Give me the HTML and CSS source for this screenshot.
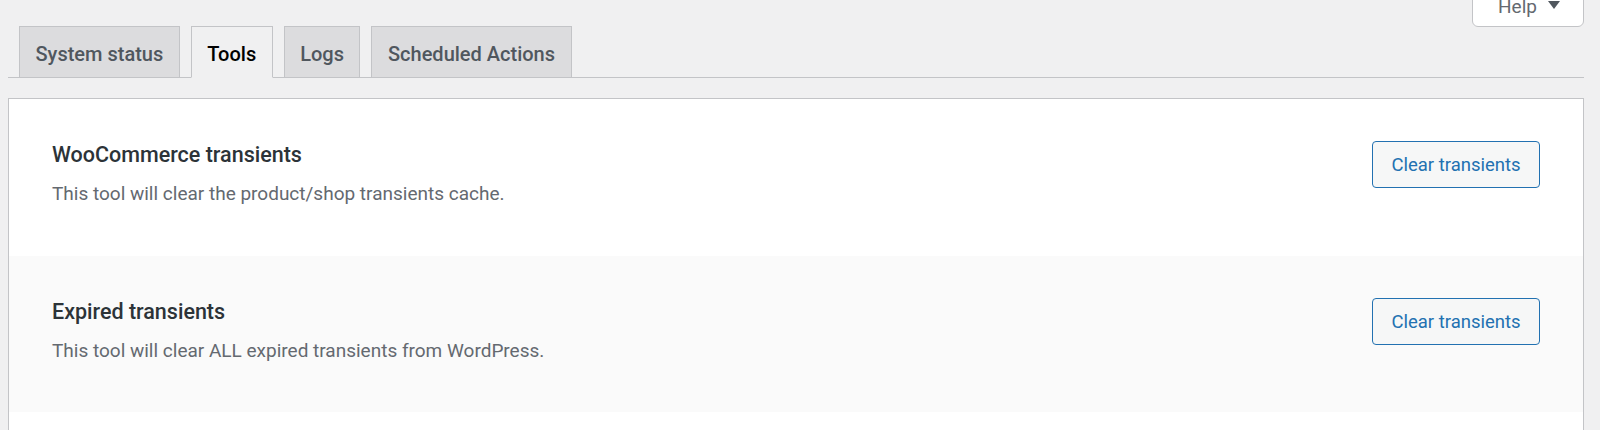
FILE: index.html
```html
<!DOCTYPE html>
<html lang="en">
<head>
<meta charset="utf-8">
<title>Status ‹ Tools</title>
<link rel="stylesheet" href="styles.css">
</head>
<body>
<div class="help-bar">
  <button class="help-toggle" type="button">Help <span class="caret"></span></button>
</div>
<nav class="tabs">
  <a class="tab" href="#">System status</a>
  <a class="tab active" href="#">Tools</a>
  <a class="tab" href="#">Logs</a>
  <a class="tab" href="#">Scheduled Actions</a>
</nav>
<div class="panel">
  <div class="tool-row">
    <div class="tool-text">
      <div class="tool-name">WooCommerce transients</div>
      <p class="tool-desc">This tool will clear the product/shop transients cache.</p>
    </div>
    <button class="tool-btn" type="button">Clear transients</button>
  </div>
  <div class="tool-row alt">
    <div class="tool-text">
      <div class="tool-name">Expired transients</div>
      <p class="tool-desc">This tool will clear ALL expired transients from WordPress.</p>
    </div>
    <button class="tool-btn" type="button">Clear transients</button>
  </div>
  <div class="tool-row empty"></div>
</div>
</body>
</html>
```
FILE: styles.css
```css
html, body {
  margin: 0;
  padding: 0;
  background: #f0f0f1;
  font-family: Roboto, "Liberation Sans", sans-serif;
  overflow: hidden;
}

.help-bar {
  height: 26px;
  display: flex;
  justify-content: flex-end;
  padding-right: 16px;
}

.help-toggle {
  box-sizing: border-box;
  width: 112px;
  height: 33px;
  margin-top: -6px;
  padding: 0 0 0 25px;
  display: flex;
  align-items: flex-start;
  gap: 11px;
  background: #fff;
  border: 1px solid #c3c4c7;
  border-radius: 0 0 6px 6px;
  font-family: Roboto, sans-serif;
  font-size: 19px;
  line-height: 24px;
  color: #646970;
}

.caret {
  width: 0;
  height: 0;
  margin-top: 6px;
  border-left: 6px solid transparent;
  border-right: 6px solid transparent;
  border-top: 8px solid #50575e;
}

.tabs {
  display: flex;
  align-items: flex-end;
  margin: 0 16px 0 8px;
  border-bottom: 1px solid #c3c4c7;
}

.tab {
  box-sizing: border-box;
  height: 52px;
  margin: 0 0 -1px 11px;
  padding: 4px 15.5px 0;
  line-height: 46px;
  font-size: 20px;
  font-weight: 500;
  color: #50575e;
  text-decoration: none;
  background: #dcdcde;
  border: 1px solid #c3c4c7;
  white-space: nowrap;
}

.tab.active {
  background: #f0f0f1;
  border-bottom-color: #f0f0f1;
  color: #000;
}

.panel {
  margin: 20px 16px 0 8px;
  background: #fff;
  border: 1px solid #c3c4c7;
}

.tool-row {
  box-sizing: border-box;
  height: 157px;
  padding: 42px 43px 0;
  display: flex;
  justify-content: space-between;
  align-items: flex-start;
}

.tool-row.alt {
  height: 156px;
  background: #fafafa;
}

.tool-row.empty {
  height: 40px;
}

.tool-name {
  margin-top: 1px;
  font-size: 21.5px;
  font-weight: 500;
  line-height: 26px;
  color: #2c3338;
}

.tool-desc {
  margin: 14px 0 0;
  font-size: 19px;
  line-height: 24px;
  color: #646970;
}

.tool-btn {
  box-sizing: border-box;
  width: 168px;
  height: 47px;
  padding: 1px 0 0;
  font-family: Roboto, sans-serif;
  font-size: 18.5px;
  color: #2271b1;
  background: #f6f7f7;
  border: 1px solid #2271b1;
  border-radius: 4px;
  cursor: pointer;
}
```
